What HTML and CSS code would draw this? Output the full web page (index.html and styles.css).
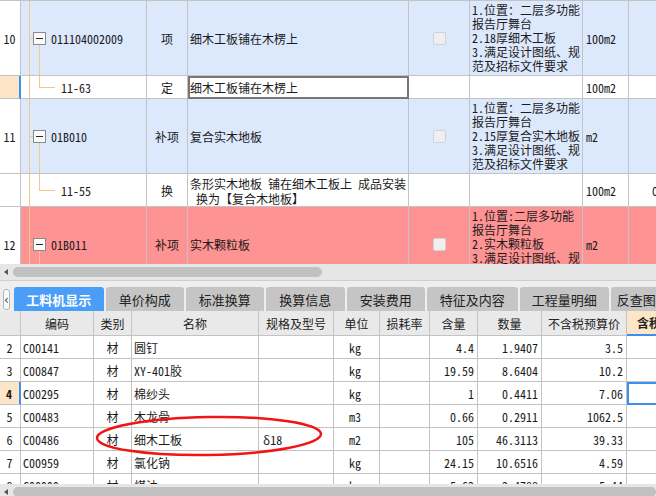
FILE: index.html
```html
<!DOCTYPE html>
<html lang="zh-CN">
<head>
<meta charset="utf-8">
<title>工料机显示</title>
<link rel="stylesheet" href="styles.css">
</head>
<body>
<div class="app">
  <div class="top">
    <div class="trow blue tall">
      <div class="rn">10</div>
      <div class="code parent"><span class="tog"></span>011104002009</div>
      <div class="type">项</div>
      <div class="name">细木工板铺在木楞上</div>
      <div class="chk"><span class="cb"></span></div>
      <div class="feat">1.位置：二层多功能<br>报告厅舞台<br>2.18厚细木工板<br>3.满足设计图纸、规<br>范及招标文件要求</div>
      <div class="unit">100m2</div>
      <div class="more"></div>
    </div>
    <div class="trow white cur r23">
      <div class="rn"></div>
      <div class="code child">11-63</div>
      <div class="type">定</div>
      <div class="name edit">细木工板铺在木楞上</div>
      <div class="chk"></div>
      <div class="feat"></div>
      <div class="unit">100m2</div>
      <div class="more"></div>
    </div>
    <div class="trow blue tall">
      <div class="rn">11</div>
      <div class="code parent"><span class="tog"></span>01B010</div>
      <div class="type">补项</div>
      <div class="name">复合实木地板</div>
      <div class="chk"><span class="cb"></span></div>
      <div class="feat">1.位置：二层多功能<br>报告厅舞台<br>2.15厚复合实木地板<br>3.满足设计图纸、规<br>范及招标文件要求</div>
      <div class="unit">m2</div>
      <div class="more"></div>
    </div>
    <div class="trow white r33">
      <div class="rn"></div>
      <div class="code child">11-55</div>
      <div class="type">换</div>
      <div class="name two">条形实木地板 铺在细木工板上 成品安装
 换为【复合木地板】</div>
      <div class="chk"></div>
      <div class="feat"></div>
      <div class="unit">100m2</div>
      <div class="more val">0.5</div>
    </div>
    <div class="trow red tall">
      <div class="rn">12</div>
      <div class="code parent"><span class="tog"></span>01B011</div>
      <div class="type">补项</div>
      <div class="name">实木颗粒板</div>
      <div class="chk"><span class="cb"></span></div>
      <div class="feat">1.位置:二层多功能<br>报告厅舞台<br>2.实木颗粒板<br>3.满足设计图纸、规<br>范及招标文件要求</div>
      <div class="unit">m2</div>
      <div class="more"></div>
    </div>
  </div>
  <div class="hscroll"><span class="arrow"></span><span class="thumb"></span></div>

  <div class="tabbar">
    <span class="tabnav">‹</span>
    <span class="tab active w90">工料机显示</span>
    <span class="tab w78">单价构成</span>
    <span class="tab w78">标准换算</span>
    <span class="tab w79">换算信息</span>
    <span class="tab w78">安装费用</span>
    <span class="tab w91">特征及内容</span>
    <span class="tab w89">工程量明细</span>
    <span class="tab w60">反查图元</span>
  </div>

  <div class="bottom">
    <div class="brow head">
      <div></div><div>编码</div><div>类别</div><div>名称</div><div>规格及型号</div><div>单位</div><div>损耗率</div><div>含量</div><div>数量</div><div>不含税预算价</div><div class="hl">含税</div>
    </div>
    <div class="brow">
      <div class="rn">2</div><div class="c">C00141</div><div class="k">材</div><div class="n">圆钉</div><div class="s"></div><div class="u">kg</div><div></div><div class="num">4.4</div><div class="num">1.9407</div><div class="num">3.5</div><div></div>
    </div>
    <div class="brow">
      <div class="rn">3</div><div class="c">C00847</div><div class="k">材</div><div class="n">XY-401胶</div><div class="s"></div><div class="u">kg</div><div></div><div class="num">19.59</div><div class="num">8.6404</div><div class="num">10.2</div><div></div>
    </div>
    <div class="brow cur">
      <div class="rn">4</div><div class="c">C00295</div><div class="k">材</div><div class="n">棉纱头</div><div class="s"></div><div class="u">kg</div><div></div><div class="num">1</div><div class="num">0.4411</div><div class="num">7.06</div><div class="sel"></div>
    </div>
    <div class="brow">
      <div class="rn">5</div><div class="c">C00483</div><div class="k">材</div><div class="n">木龙骨</div><div class="s"></div><div class="u">m3</div><div></div><div class="num">0.66</div><div class="num">0.2911</div><div class="num">1062.5</div><div></div>
    </div>
    <div class="brow">
      <div class="rn">6</div><div class="c">C00486</div><div class="k">材</div><div class="n">细木工板</div><div class="s">δ18</div><div class="u">m2</div><div></div><div class="num">105</div><div class="num">46.3113</div><div class="num">39.33</div><div></div>
    </div>
    <div class="brow">
      <div class="rn">7</div><div class="c">C00959</div><div class="k">材</div><div class="n">氯化钠</div><div class="s"></div><div class="u">kg</div><div></div><div class="num">24.15</div><div class="num">10.6516</div><div class="num">4.59</div><div></div>
    </div>
    <div class="brow">
      <div class="rn">8</div><div class="c">C00999</div><div class="k">材</div><div class="n">煤油</div><div class="s"></div><div class="u">kg</div><div></div><div class="num">5.62</div><div class="num">2.4788</div><div class="num">5.44</div><div></div>
    </div>
  </div>
  <div class="hscroll bscroll"><span class="arrow"></span><span class="thumb"></span></div>

  <svg class="mark" width="656" height="496" viewBox="0 0 656 496">
    <ellipse cx="209" cy="436" rx="112" ry="19" transform="rotate(-1 209 436)"></ellipse>
  </svg>
</div>
</body>
</html>
```

FILE: styles.css
```css
* { box-sizing: border-box; margin: 0; padding: 0; }

html, body {
  width: 656px;
  height: 496px;
  overflow: hidden;
  background: #ffffff;
}

body {
  font-family: "Noto Sans Mono CJK SC", "Noto Sans CJK SC", monospace;
  font-size: 12px;
  color: #1b1b1b;
}

.app {
  position: relative;
  width: 656px;
  height: 496px;
  overflow: hidden;
  display: flex;
  flex-direction: column;
}

/* ---------- upper grid ---------- */
.top {
  flex: none;
  height: 264px;
  overflow: hidden;
  border-top: 1px solid #c3c3c3;
}

.trow {
  display: grid;
  grid-template-columns: 21px 126px 41px 221px 61px 113px 46px 60px;
  width: 689px;
}
.trow.tall { height: 75px; }
.trow.r23 { height: 23px; }
.trow.r33 { height: 33px; }

.trow > div {
  display: flex;
  align-items: center;
  border-right: 1px solid #c3c3c3;
  border-bottom: 1px solid #c3c3c3;
  white-space: nowrap;
  overflow: hidden;
}

.trow.blue > div { background-color: #dce8fc; }
.trow.red > div { background-color: #fe9393; }
.trow.white > div { background-color: #ffffff; }

.trow > .rn {
  background-color: #ffffff !important;
  justify-content: center;
  padding-right: 1px;
}
.trow.cur > .rn {
  background-color: #fde5c8 !important;
  border-right: 2px solid #3f8ff0;
}

.code {
  --tree: #f7c68b;
}
.code.parent {
  padding-left: 12px;
  background-image:
    linear-gradient(var(--tree), var(--tree)),
    linear-gradient(var(--tree), var(--tree)),
    linear-gradient(var(--tree), var(--tree));
  background-repeat: no-repeat;
  background-position: 8px 0, 8px 50%, 18px 100%;
  background-size: 1px 100%, 4px 1px, 1px calc(50% - 6px);
}
.code.child {
  padding-left: 40px;
  background-image:
    linear-gradient(var(--tree), var(--tree)),
    linear-gradient(var(--tree), var(--tree)),
    linear-gradient(var(--tree), var(--tree));
  background-repeat: no-repeat;
  background-position: 8px 0, 18px 0, 18px 50%;
  background-size: 1px 100%, 1px 50%, 16px 1px;
}

.tog {
  width: 13px;
  height: 13px;
  margin-right: 5px;
  border: 1px solid #8a8a8a;
  background: #fbfbfb linear-gradient(#2a2a2a, #2a2a2a) center / 7px 1px no-repeat;
  flex: none;
}

.type { justify-content: center; }
.name { padding-left: 2px; }
.name.edit { border: 2px solid #777777 !important; padding-left: 0; }
.name.two {
  white-space: pre;
  line-height: 15px;
  align-items: center;
  padding-top: 1px;
}

.chk { justify-content: center; }
.cb {
  width: 13px;
  height: 13px;
  border: 1px solid #d2d2d2;
  border-radius: 2px;
  background: #efefef;
}

.feat {
  padding-left: 2px;
  line-height: 14px;
}
.unit { padding-left: 3px; }
.more.val { padding-left: 23px; }

/* ---------- scrollbars ---------- */
.hscroll {
  flex: none;
  height: 16px;
  background: #e6e6e6;
  display: flex;
  align-items: center;
  padding-left: 4px;
}
.hscroll .arrow {
  width: 0;
  height: 0;
  border-top: 3px solid transparent;
  border-bottom: 3px solid transparent;
  border-right: 4px solid #555555;
  margin-right: 5px;
}
.hscroll .thumb {
  width: 309px;
  height: 10px;
  border-radius: 5px;
  background: #c1c1c1;
}
.bscroll {
  align-items: flex-start;
  padding-top: 3px;
}
.bscroll .arrow { margin-top: 2px; }
.bscroll .thumb { width: 660px; }

/* ---------- tabs ---------- */
.tabbar {
  flex: none;
  height: 31px;
  border-top: 1px solid #cfcfcf;
  background: #eeeeee;
  display: flex;
  align-items: flex-end;
  gap: 2px;
  padding-left: 3px;
  white-space: nowrap;
}
.tabnav {
  align-self: flex-start;
  margin-top: 8px;
  margin-right: 2px;
  width: 12px;
  height: 21px;
  border: 1px solid #b5b5b5;
  border-radius: 3px;
  background: #fafafa;
  color: #444;
  font-size: 12px;
  display: flex;
  align-items: center;
  justify-content: center;
  font-family: "DejaVu Sans", sans-serif;
}
.tab {
  flex: none;
  height: 24px;
  border-radius: 3px 3px 0 0;
  background: #c5c5c5;
  color: #222;
  font-size: 13px;
  display: flex;
  align-items: center;
  justify-content: center;
  overflow: hidden;
}
.tab.active {
  background: #4a9ef7;
  color: #ffffff;
  font-weight: bold;
}
.w90 { width: 90px; }
.w78 { width: 78px; }
.w79 { width: 79px; }
.w91 { width: 91px; }
.w89 { width: 89px; }
.w60 { width: 60px; justify-content: flex-start !important; padding-left: 6px; }

/* ---------- lower grid ---------- */
.bottom {
  flex: none;
  height: 173px;
  overflow: hidden;
}
.brow {
  display: grid;
  grid-template-columns: 21px 73px 38px 127px 75px 46px 50px 48px 64px 85px 60px;
  width: 687px;
  height: 23px;
}
.brow > div {
  display: flex;
  align-items: center;
  border-right: 1px solid #c3c3c3;
  border-bottom: 1px solid #c3c3c3;
  white-space: nowrap;
  overflow: hidden;
  background: #ffffff;
}
.brow.head { height: 25px; }
.brow.head > div {
  background: #e9e9e9;
  justify-content: center;
  color: #222;
}
.brow.head > .hl {
  background: #fde5c8;
  font-weight: bold;
  justify-content: flex-start;
  padding-left: 10px;
  border-bottom: 2px solid #3c8ef0;
}

.brow > .rn { justify-content: center; padding-right: 1px; }
.brow.cur > .rn {
  background: #fde5c8;
  font-weight: bold;
  border-right: 2px solid #3f8ff0;
}
.brow > .c { padding-left: 2px; }
.brow > .k { justify-content: center; }
.brow > .n { padding-left: 2px; }
.brow > .s { padding-left: 4px; }
.brow > .u { padding-left: 15px; }
.brow > .num { justify-content: flex-end; padding-right: 3px; }
.brow > .sel { border: 2px solid #3c8ef0; }

/* ---------- annotation ---------- */
.mark {
  position: absolute;
  left: 0;
  top: 0;
  pointer-events: none;
}
.mark ellipse {
  fill: none;
  stroke: #f01414;
  stroke-width: 2.5;
}
```
